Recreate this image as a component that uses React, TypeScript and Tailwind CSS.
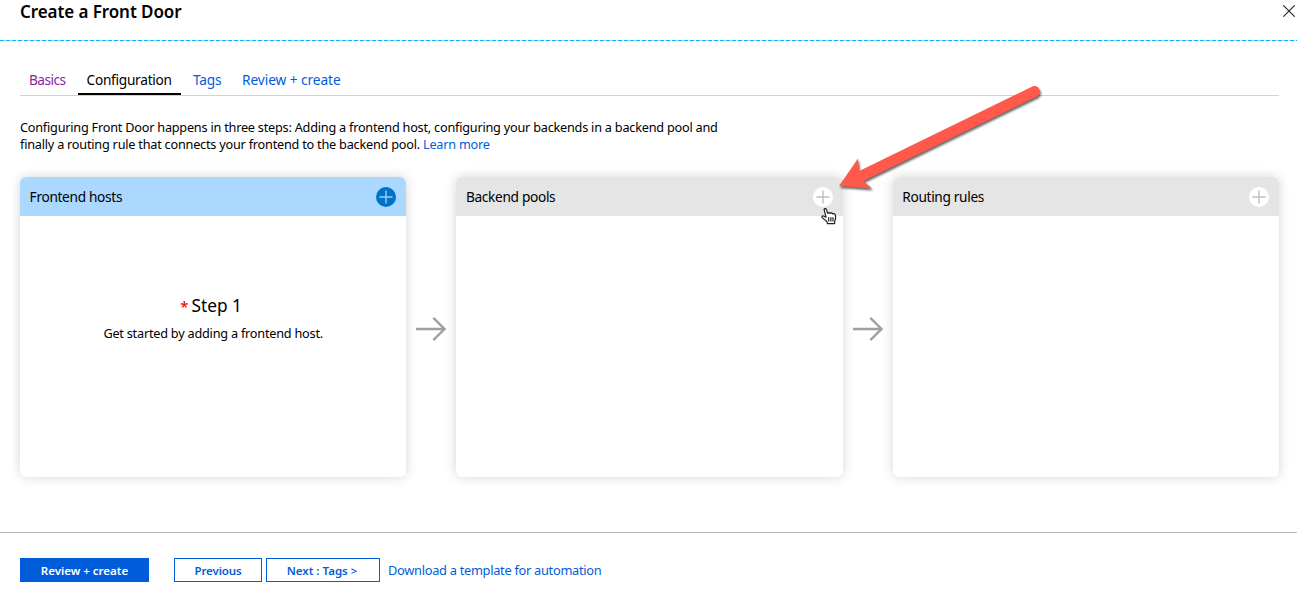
import type { ReactNode } from "react";

function PlusButton({ primary = false }: { primary?: boolean }) {
  return (
    <button
      aria-label="Add"
      className={`flex size-5 items-center justify-center rounded-full ${primary ? "bg-[#0072c9] text-[#9fcdf2]" : "bg-white text-[#c0c0c0]"}`}
    >
      <svg width="20" height="20" viewBox="0 0 20 20" stroke="currentColor" strokeWidth="1.4" fill="none">
        <path d="M10 3.5v13M3.5 10h13" />
      </svg>
    </button>
  );
}

function Card({ title, active = false, overlay, children }: { title: string; active?: boolean; overlay?: ReactNode; children?: ReactNode }) {
  return (
    <section className="relative h-[300px] min-w-0 flex-1 rounded-[6px] bg-white shadow-[0_0_12px_rgba(0,0,0,0.17)]">
      <header className={`flex h-[39px] items-center justify-between rounded-t-[6px] px-[10px] ${active ? "bg-[#abd8ff]" : "bg-[#e5e5e5]"}`}>
        <h2 className="-ml-[0.4px] pt-[2px] text-[13.7px] tracking-[-0.33px]">{title}</h2>
        <PlusButton primary={active} />
      </header>
      {children}
      {overlay}
    </section>
  );
}

function FlowArrow() {
  return (
    <div className="flex w-[50px] shrink-0 items-center justify-center pt-[3px]">
      <svg width="30" height="26" viewBox="0 0 30 26" fill="none" stroke="#a0a0a0" strokeWidth="2.4">
        <path d="M0 13h28.5M17.3 1.8L28.5 13L17.3 24.2" />
      </svg>
    </div>
  );
}

function HandPointer() {
  return (
    <svg className="absolute left-[365px] top-[30px]" width="16" height="18" viewBox="0 0 16 18" fill="#fff" stroke="#222" strokeWidth="1.2" strokeLinejoin="round">
      <path d="M5 10.3L3.2 3.2C2.8 1.5 4.9.9 5.4 2.5L6.8 6.6C6.8 5.2 8.9 5.2 9.2 6.5C9.5 5.5 11.3 5.7 11.5 7C12 6.3 13.7 6.4 14.2 7.8C15 10.3 14.8 11.8 13.9 13.7L13.5 16.6H6.5L5.8 14.5L1.2 10.6C.4 9.2 1.8 8.3 3 9.2Z" />
      <path d="M7.7 10.2v4.2M9.9 10.2v4.200M12 10.2v4.2" />
    </svg>
  );
}

function Callout() {
  return (
    <svg className="pointer-events-none absolute left-[833px] top-[78px] overflow-visible" width="215" height="120" viewBox="833 78 215 120">
      <path
        className="drop-shadow-[1px_2px_1px_rgba(0,0,0,0.6)]"
        fill="#ff594c"
        d="M839 186L858 158.5L859.2 171L1032.5 86.5C1039 84 1043 93.5 1037 96.5L863.5 181L872 188.5Z"
      />
    </svg>
  );
}

export default function App() {
  return (
    <main className="relative flex h-[594px] w-[1297px] flex-col overflow-hidden bg-white font-['Noto_Sans','Open_Sans',sans-serif] text-black">
      <header className="flex h-10 shrink-0 items-start justify-between pl-5 pr-[2px]">
        <h1 className="text-[17px] font-semibold leading-6 tracking-[-0.08px]">Create a Front Door</h1>
        <button aria-label="Close" className="mt-[5px]">
          <svg width="12" height="12" viewBox="0 0 12 12" fill="none" stroke="#222" strokeWidth="1.1">
            <path d="M.3.3l11.4 11.4M11.7.3L.3 11.7" />
          </svg>
        </button>
      </header>
      <div className="h-px shrink-0 bg-[repeating-linear-gradient(90deg,#00b8f4_0px,#00b8f4_4px,#d3e4ea_4px,#d3e4ea_6px)]" />

      <nav className="ml-5 mr-[18px] mt-[27px] flex h-[28px] shrink-0 border-b border-[#d2d2d2] text-[13.7px] leading-[23px]">
        <a className="w-[58px] pl-[9px] tracking-[-0.55px] text-[#881fa5]">Basics</a>
        <a className="h-[27px] w-[103px] border-b-2 border-black pl-[8.5px] tracking-[-0.27px]">Configuration</a>
        <a className="w-[49px] pl-[12px] tracking-[-0.2px] text-[#015cda]">Tags</a>
        <a className="pl-[12px] tracking-[-0.07px] text-[#015cda]">Review + create</a>
      </nav>

      <div className="ml-5 mt-[23px] h-[35px] shrink-0 whitespace-nowrap text-[12.7px] leading-[17px] tracking-[-0.223px]">
        <p>Configuring Front Door happens in three steps: Adding a frontend host, configuring your backends in a backend pool and</p>
        <p>finally a routing rule that connects your frontend to the backend pool. <a className="text-[#015cda]">Learn more</a></p>
      </div>

      <div className="ml-5 mr-[18px] mt-[23px] flex h-[300px] shrink-0">
        <Card title="Frontend hosts" active>
          <div className="flex flex-col items-center pt-[77px]">
            <h3 className="mr-[4px] text-[17.3px] leading-[26px]"><span className="mr-[3px] text-[15px] font-medium text-[#f00]">*</span>Step 1</h3>
            <p className="mt-[6px] whitespace-nowrap text-[12.7px] leading-[17px] tracking-[-0.22px]">Get started by adding a frontend host.</p>
          </div>
        </Card>
        <FlowArrow />
        <Card title="Backend pools" overlay={<HandPointer />} />
        <FlowArrow />
        <Card title="Routing rules" />
      </div>

      <footer className="mt-[55px] flex h-[62px] shrink-0 items-start border-t border-[#bababa] pl-5 pt-[25px] text-[11.5px]">
        <button className="h-6 w-[129px] bg-[#015cda] pt-[2px] font-semibold text-white">Review + create</button>
        <button className="ml-[25px] h-6 w-[88px] border border-[#015cda] pt-[2px] font-semibold tracking-[-0.1px] text-[#015cda]">Previous</button>
        <button className="ml-1 h-6 w-[114px] border border-[#015cda] pt-[2px] pr-[2px] font-semibold text-[#015cda]">Next : Tags &gt;</button>
        <a className="ml-[8px] whitespace-nowrap text-[12.8px] leading-6 tracking-[-0.28px] text-[#015cda]">Download a template for automation</a>
      </footer>
      <Callout />
    </main>
  );
}
